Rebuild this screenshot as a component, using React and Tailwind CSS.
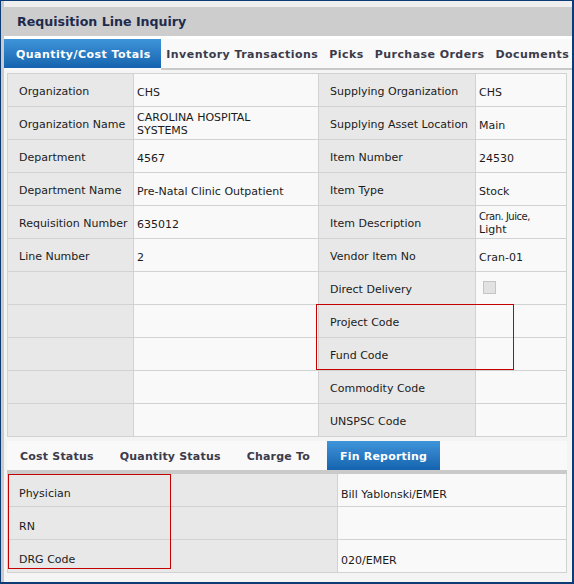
const TOP_ROWS = [
  ['Organization', 'CHS', 'Supplying Organization', 'CHS'],
  ['Organization Name', ['CAROLINA HOSPITAL', 'SYSTEMS'], 'Supplying Asset Location', 'Main'],
  ['Department', '4567', 'Item Number', '24530'],
  ['Department Name', 'Pre-Natal Clinic Outpatient', 'Item Type', 'Stock'],
  ['Requisition Number', '635012', 'Item Description', ['Cran. Juice,', 'Light']],
  ['Line Number', '2', 'Vendor Item No', 'Cran-01'],
  ['', '', 'Direct Delivery', 'checkbox'],
  ['', '', 'Project Code', ''],
  ['', '', 'Fund Code', ''],
  ['', '', 'Commodity Code', ''],
  ['', '', 'UNSPSC Code', ''],
]

const BOTTOM_ROWS = [
  ['Physician', 'Bill Yablonski/EMER'],
  ['RN', ''],
  ['DRG Code', '020/EMER'],
]

const TOP_TABS = ['Inventory Transactions', 'Picks', 'Purchase Orders', 'Documents']
const SUB_TABS = ['Cost Status', 'Quantity Status', 'Charge To']

function Label({ children, low }) {
  return (
    <div className={`h-[33px] bg-[#e8e8e8] border-r border-b border-[#d2d2d2] pl-[11px] flex items-center ${low ? 'pt-[8px]' : 'pt-[5px]'}`}>
      {children}
    </div>
  )
}

function Value({ children, low }) {
  const lines = Array.isArray(children)
  return (
    <div className={`h-[33px] bg-[#f9f9f9] border-r border-b border-[#d2d2d2] pl-[3px] flex items-center leading-[13px] ${low ? 'pt-[8px]' : lines ? 'pt-[2px]' : 'pt-[4px]'}`}>
      {lines ? (
        <div>
          <div className={children[0] === 'Cran. Juice,' ? 'text-[10px] tracking-[-0.5px]' : ''}>{children[0]}</div>
          <div>{children[1]}</div>
        </div>
      ) : children}
    </div>
  )
}

export default function App() {
  return (
    <div
      className="w-[574px] h-[584px] overflow-hidden border-l border-t border-r-2 border-b-2 border-[#0d3c74] bg-[#f4f4f4] text-[11px] text-[#1b1b1b]"
      style={{ fontFamily: '"DejaVu Sans", Verdana, sans-serif' }}
    >
      <div className="h-full border-l-[3px] border-[#cbcbcb] flex flex-col">
        <div className="h-[6px] bg-[#efefef]" />
        <div className="h-[29px] bg-[#cdcdcd] flex items-center pl-[13px] pt-[2px] text-[12.6px] font-bold text-[#1e2b4d]">
          Requisition Line Inquiry
        </div>
        <div className="h-[3px] bg-white" />

        {/* main tabs */}
        <div className="flex h-[31px] bg-[#f9f9f9] font-bold tracking-[0.45px] whitespace-nowrap">
          <div className="h-[29px] shrink-0 pl-[12px] pr-[10px] pt-[3px] flex items-center text-white bg-gradient-to-b from-[#3f95da] to-[#1563ae]">
            Quantity/Cost Totals
          </div>
          <div className="flex-1 flex border-b-2 border-[#c9c9c9] mr-[5px]">
            {TOP_TABS.map(t => (
              <div key={t} className="h-[29px] shrink-0 px-[5.5px] pt-[3px] flex items-center text-[#3b3b4b]">
                {t}
              </div>
            ))}
          </div>
        </div>

        <div className="pl-[3px] pr-[5px] pt-[3px]">
          <div className="relative grid grid-cols-[126px_185px_157px_91px] border-l border-t border-[#d2d2d2]">
            {TOP_ROWS.map((r, i) => (
              <div key={i} className="contents">
                <Label>{r[0]}</Label>
                <Value>{r[1]}</Value>
                <Label>{r[2]}</Label>
                {r[3] === 'checkbox' ? (
                  <Value>
                    <span className="ml-[4px] -mt-[6px] w-[13px] h-[13px] bg-[#e2e2e2] border border-[#c4c4c4]" />
                  </Value>
                ) : (
                  <Value>{r[3]}</Value>
                )}
              </div>
            ))}
            <div className="absolute left-[308px] top-[230px] w-[198px] h-[66px] border border-[#c40000]" />
          </div>
        </div>

        {/* sub tabs */}
        <div className="pl-[3px] pr-[5px] pt-[4px]">
          <div className="flex h-[33px] bg-[#f9f9f9] border-b-4 border-[#cacaca] font-bold tracking-[0.2px] whitespace-nowrap">
            {SUB_TABS.map(t => (
              <div key={t} className="h-[29px] px-[13px] pt-[3px] flex items-center text-[#3b3b4b]">
                {t}
              </div>
            ))}
            <div className="h-[29px] ml-[4px] px-[13px] pt-[3px] flex items-center text-white bg-gradient-to-b from-[#3f95da] to-[#1563ae]">
              Fin Reporting
            </div>
          </div>
          <div className="relative grid grid-cols-[330px_1fr] border-l border-[#d2d2d2]">
            {BOTTOM_ROWS.map((r, i) => (
              <div key={i} className="contents">
                <Label low>{r[0]}</Label>
                <Value low>{r[1]}</Value>
              </div>
            ))}
            <div className="absolute left-[0px] top-[0px] w-[163px] h-[95px] border border-[#c40000]" />
          </div>
        </div>
      </div>
    </div>
  )
}
